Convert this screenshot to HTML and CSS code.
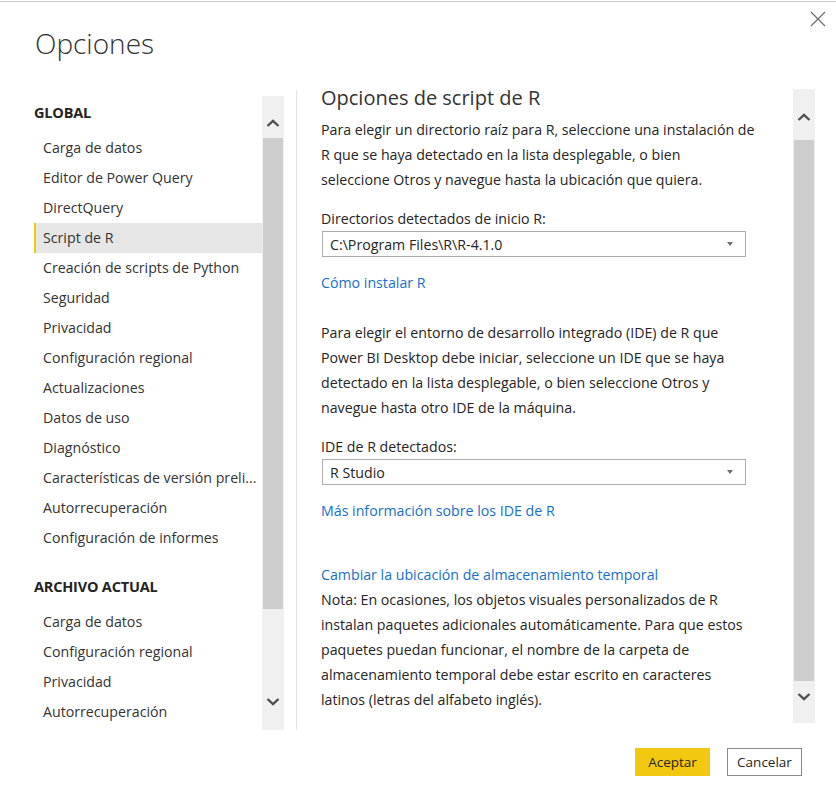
FILE: index.html
```html
<!DOCTYPE html>
<html lang="es">
<head>
    <meta charset="UTF-8">
    <meta name="viewport" content="width=device-width, initial-scale=1.0">
    <title>Opciones</title>
    <link rel="stylesheet" href="styles.css">
</head>
<body>
    <div class="top-strip"></div>
    <div class="dialog">
        <button class="close" type="button" aria-label="Cerrar">
            <svg width="16" height="16" viewBox="0 0 16 16"><path d="M1 1L15 15M15 1L1 15" stroke="#6b6b6b" stroke-width="1.2" fill="none"/></svg>
        </button>
        <header class="header">
            <h1>Opciones</h1>
        </header>

        <div class="main">
            <nav class="nav">
                <div class="nav-list">
                    <div class="nav-group">GLOBAL</div>
                    <a class="nav-item">Carga de datos</a>
                    <a class="nav-item">Editor de Power Query</a>
                    <a class="nav-item">DirectQuery</a>
                    <a class="nav-item active">Script de R</a>
                    <a class="nav-item">Creación de scripts de Python</a>
                    <a class="nav-item">Seguridad</a>
                    <a class="nav-item">Privacidad</a>
                    <a class="nav-item">Configuración regional</a>
                    <a class="nav-item">Actualizaciones</a>
                    <a class="nav-item">Datos de uso</a>
                    <a class="nav-item">Diagnóstico</a>
                    <a class="nav-item" title="Características de versión preliminar">Características de versión preli...</a>
                    <a class="nav-item">Autorrecuperación</a>
                    <a class="nav-item">Configuración de informes</a>
                    <div class="nav-group second">ARCHIVO ACTUAL</div>
                    <a class="nav-item">Carga de datos</a>
                    <a class="nav-item">Configuración regional</a>
                    <a class="nav-item">Privacidad</a>
                    <a class="nav-item">Autorrecuperación</a>
                </div>
                <div class="scrollbar left-bar">
                    <div class="sb-btn up">
                        <svg width="14" height="8" viewBox="0 0 14 8"><path d="M1.5 7L7 1.8L12.5 7" stroke="#505050" stroke-width="2.4" fill="none"/></svg>
                    </div>
                    <div class="sb-thumb"></div>
                    <div class="sb-btn down">
                        <svg width="14" height="8" viewBox="0 0 14 8"><path d="M1.5 1L7 6.2L12.5 1" stroke="#505050" stroke-width="2.4" fill="none"/></svg>
                    </div>
                </div>
            </nav>

            <div class="divider"></div>

            <section class="content">
                <div class="panel">
                    <h2>Opciones de script de R</h2>
                    <p class="text first">Para elegir un directorio raíz para R, seleccione una instalación de<br>R que se haya detectado en la lista desplegable, o bien<br>seleccione Otros y navegue hasta la ubicación que quiera.</p>

                    <div class="label">Directorios detectados de inicio R:</div>
                    <div class="select">
                        <span>C:\Program Files\R\R-4.1.0</span>
                        <span class="caret"></span>
                    </div>
                    <a class="link">Cómo instalar R</a>

                    <p class="text second">Para elegir el entorno de desarrollo integrado (IDE) de R que<br>Power BI Desktop debe iniciar, seleccione un IDE que se haya<br>detectado en la lista desplegable, o bien seleccione Otros y<br>navegue hasta otro IDE de la máquina.</p>

                    <div class="label">IDE de R detectados:</div>
                    <div class="select">
                        <span>R Studio</span>
                        <span class="caret"></span>
                    </div>
                    <a class="link">Más información sobre los IDE de R</a>

                    <a class="link temp">Cambiar la ubicación de almacenamiento temporal</a>
                    <p class="text note">Nota: En ocasiones, los objetos visuales personalizados de R<br>instalan paquetes adicionales automáticamente. Para que estos<br>paquetes puedan funcionar, el nombre de la carpeta de<br>almacenamiento temporal debe estar escrito en caracteres<br>latinos (letras del alfabeto inglés).</p>
                </div>
                <div class="scrollbar right-bar">
                    <div class="sb-btn up">
                        <svg width="14" height="8" viewBox="0 0 14 8"><path d="M1.5 7L7 1.8L12.5 7" stroke="#505050" stroke-width="2.4" fill="none"/></svg>
                    </div>
                    <div class="sb-thumb"></div>
                    <div class="sb-btn down">
                        <svg width="14" height="8" viewBox="0 0 14 8"><path d="M1.5 1L7 6.2L12.5 1" stroke="#505050" stroke-width="2.4" fill="none"/></svg>
                    </div>
                </div>
            </section>
        </div>

        <footer class="footer">
            <button type="button" class="btn primary">Aceptar</button>
            <button type="button" class="btn">Cancelar</button>
        </footer>
    </div>
</body>
</html>
```

FILE: styles.css
```css
body {
    margin: 0;
    padding: 0;
    background: #ffffff;
    color: #252423;
    font-family: "Open Sans", "Noto Sans", sans-serif;
    font-size: 14.2px;
    overflow: hidden;
}
.top-strip {
    height: 1px;
    border-bottom: 1px solid #c8c8c8;
}
.dialog {
    position: relative;
    height: 796px;
}
.close {
    position: absolute;
    top: 9px;
    right: 10px;
    width: 16px;
    height: 16px;
    padding: 0;
    border: none;
    background: none;
}
.header {
    padding: 21px 0 22px 35px;
}
h1 {
    margin: 0;
    font-size: 28px;
    font-weight: 300;
    line-height: 40px;
    color: #333;
}
.main {
    display: flex;
    height: 645px;
}
.nav {
    display: flex;
    width: 250px;
    padding: 11px 0 0 34px;
    box-sizing: content-box;
}
.nav-list {
    width: 228px;
    height: 634px;
    overflow: hidden;
    padding-top: 2px;
    box-sizing: border-box;
}
.nav-group {
    font-weight: 700;
    font-size: 14.5px;
    line-height: 30px;
    letter-spacing: -0.2px;
    padding-bottom: 5px;
}
.nav-group.second {
    margin-top: 19px;
}
.nav-item {
    display: block;
    line-height: 30px;
    padding: 0 3px 0 7px;
    border-left: 2px solid transparent;
    white-space: nowrap;
    overflow: hidden;
    text-overflow: ellipsis;
    color: #333;
}
.nav-item.active {
    background: #e6e6e6;
    border-left-color: #f2c811;
}
.scrollbar {
    display: flex;
    flex-direction: column;
    width: 22px;
    background: #f0f0f0;
    box-sizing: border-box;
    padding: 0 1px;
}
.left-bar {
    height: 634px;
}
.right-bar {
    margin-top: 4px;
    height: 634px;
}
.sb-btn {
    display: flex;
    justify-content: center;
    flex: none;
}
.left-bar .sb-btn.up {
    height: 42px;
    padding-top: 23px;
    box-sizing: border-box;
}
.left-bar .sb-thumb {
    height: 471px;
}
.left-bar .sb-btn.down {
    flex: 1;
    align-items: flex-end;
    padding-bottom: 24px;
}
.right-bar .sb-btn.up {
    height: 51px;
    padding-top: 24px;
    box-sizing: border-box;
}
.right-bar .sb-thumb {
    height: 541px;
}
.right-bar .sb-btn.down {
    flex: 1;
    align-items: flex-end;
    padding-bottom: 22px;
}
.sb-thumb {
    background: #cdcdcd;
    flex: none;
}
.divider {
    width: 1px;
    height: 640px;
    margin: 5px 0 0 12px;
    background: #e1e1e1;
}
.content {
    display: flex;
    padding-left: 24px;
}
.panel {
    width: 472px;
}
h2 {
    margin: 0;
    font-size: 20px;
    font-weight: 400;
    line-height: 26px;
    color: #333;
}
.text {
    margin: 0;
    line-height: 25px;
}
.text.first {
    margin-top: 6px;
}
.text.second {
    margin-top: 25px;
}
.label {
    margin-top: 14px;
    line-height: 25px;
}
.select {
    display: flex;
    align-items: center;
    justify-content: space-between;
    width: 424px;
    height: 26px;
    margin: 0 0 0 1px;
    padding: 0 12px 0 7px;
    border: 1px solid #acacac;
    box-sizing: border-box;
}
.caret {
    width: 0;
    height: 0;
    border-left: 3.5px solid transparent;
    border-right: 3.5px solid transparent;
    border-top: 4px solid #6e6e6e;
}
.link {
    display: block;
    margin-top: 13px;
    line-height: 25px;
    color: #1570cd;
    cursor: pointer;
}
.link.temp {
    margin-top: 39px;
}
.footer {
    display: flex;
    justify-content: flex-end;
    gap: 17px;
    padding: 18px 34px 0 0;
}
.btn {
    width: 75px;
    height: 28px;
    padding: 0;
    font-family: inherit;
    font-size: 13.5px;
    color: #252423;
    background: #ffffff;
    border: 1px solid #8a8a8a;
}
.btn.primary {
    background: #f2c811;
    border-color: #f2c811;
}
```
